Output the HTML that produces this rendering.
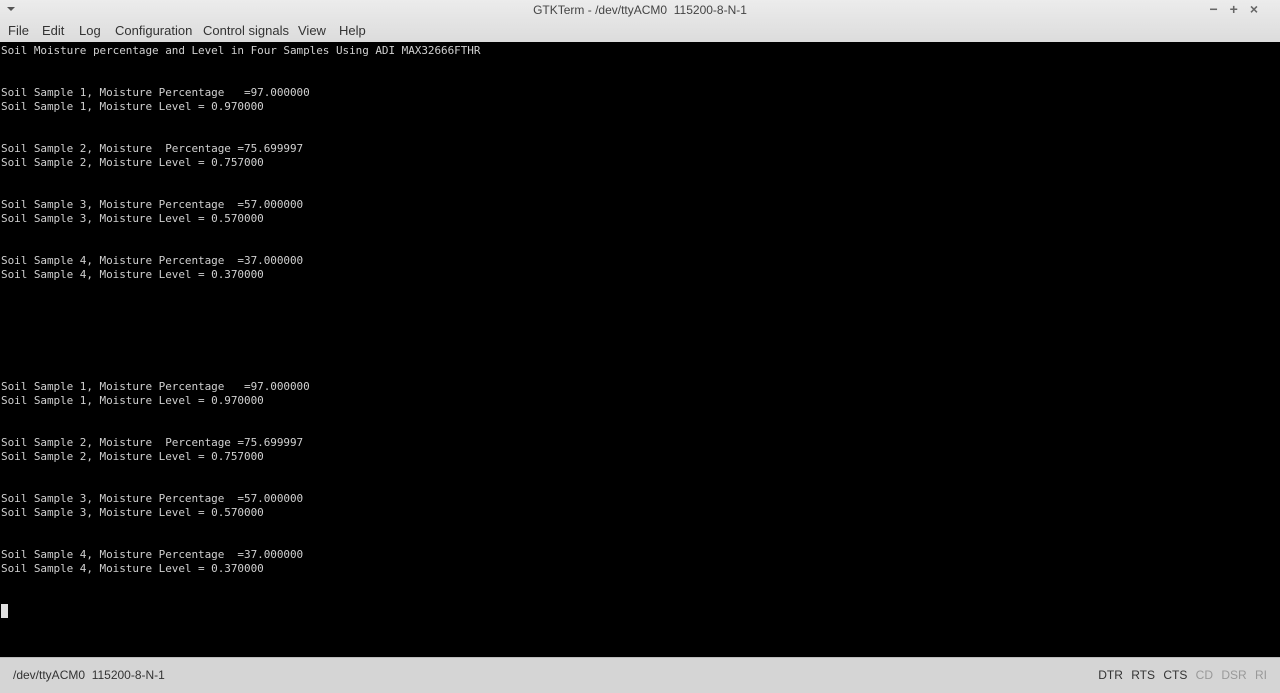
<!DOCTYPE html>
<html><head><meta charset="utf-8"><style>
html,body{margin:0;padding:0;width:1280px;height:692px;overflow:hidden;background:#000;font-family:"Liberation Sans","DejaVu Sans",sans-serif}
#top{position:absolute;left:0;top:0;width:1280px;height:42px;background:linear-gradient(#ececec,#dcdcdc)}
#title{position:absolute;top:3px;left:0;width:1280px;text-align:center;font-size:12px;color:#444}
#ctl{position:absolute;right:10px;top:1px;font-size:14px;color:#666;letter-spacing:12px;font-weight:bold}
#tri{position:absolute;left:7px;top:7px;width:0;height:0;border-left:4px solid transparent;border-right:4px solid transparent;border-top:4px solid #555}
#menu{position:absolute;top:23px;left:8px;font-size:13px;color:#333;white-space:nowrap}
#menu span{position:absolute;top:0}
#term{position:absolute;left:1px;top:44px;margin:0;font-family:"DejaVu Sans Mono","Liberation Mono",monospace;font-size:11px;line-height:14px;color:#d0d0d0;white-space:pre;letter-spacing:-0.055px}
#cur{position:absolute;left:1px;top:604px;width:7px;height:14px;background:#e0e0e0}
#status{position:absolute;left:0;top:657px;width:1280px;height:35px;background:#d5d5d5;border-top:1px solid #bbb;font-size:12px;color:#333}
#status .l{position:absolute;left:13px;top:10px}
#status .r{position:absolute;right:13px;top:10px;word-spacing:5px}
.g{color:#999}
</style></head><body>
<div id="top"><div id="tri"></div><div id="title">GTKTerm - /dev/ttyACM0&nbsp; 115200-8-N-1</div><div id="ctl">−+×</div>
<div id="menu"><span style="left:0">File</span><span style="left:34px">Edit</span><span style="left:71px">Log</span><span style="left:107px">Configuration</span><span style="left:195px">Control signals</span><span style="left:290px">View</span><span style="left:331px">Help</span></div></div>
<pre id="term">Soil Moisture percentage and Level in Four Samples Using ADI MAX32666FTHR


Soil Sample 1, Moisture Percentage   =97.000000
Soil Sample 1, Moisture Level = 0.970000


Soil Sample 2, Moisture  Percentage =75.699997
Soil Sample 2, Moisture Level = 0.757000


Soil Sample 3, Moisture Percentage  =57.000000
Soil Sample 3, Moisture Level = 0.570000


Soil Sample 4, Moisture Percentage  =37.000000
Soil Sample 4, Moisture Level = 0.370000







Soil Sample 1, Moisture Percentage   =97.000000
Soil Sample 1, Moisture Level = 0.970000


Soil Sample 2, Moisture  Percentage =75.699997
Soil Sample 2, Moisture Level = 0.757000


Soil Sample 3, Moisture Percentage  =57.000000
Soil Sample 3, Moisture Level = 0.570000


Soil Sample 4, Moisture Percentage  =37.000000
Soil Sample 4, Moisture Level = 0.370000</pre>
<div id="cur"></div>
<div id="status"><span class="l">/dev/ttyACM0&nbsp; 115200-8-N-1</span><span class="r">DTR RTS CTS <span class="g">CD DSR RI</span></span></div>
</body></html>
